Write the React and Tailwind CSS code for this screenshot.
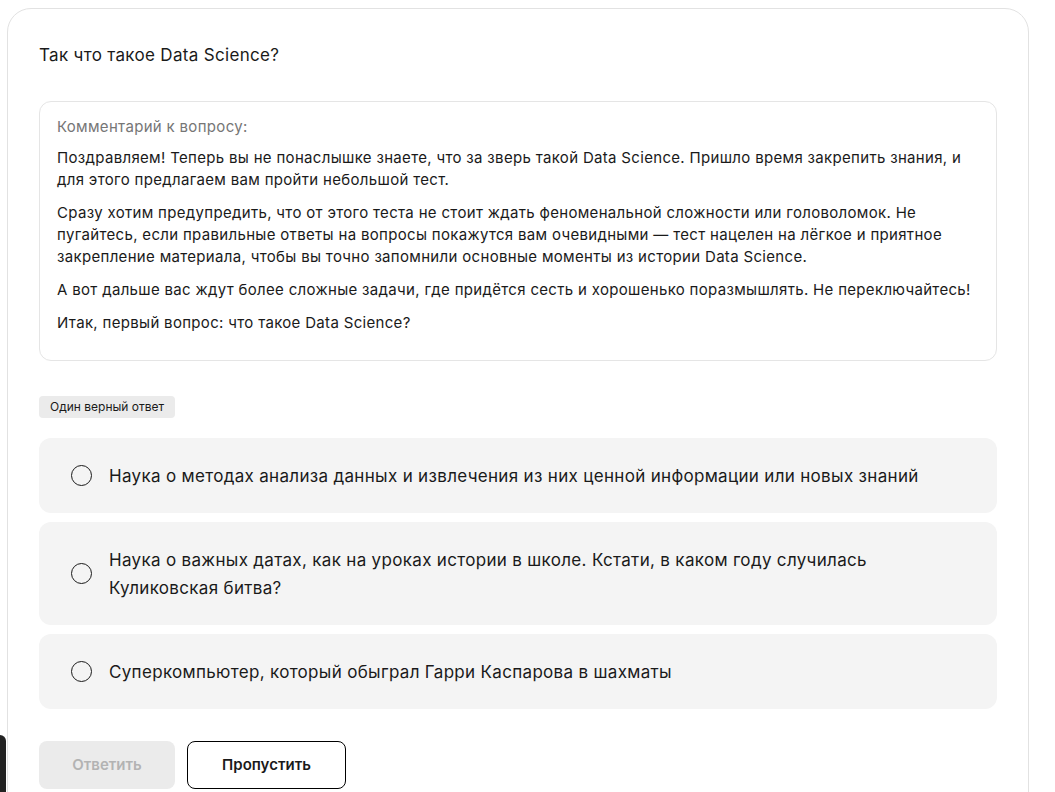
import React, { useState } from 'react';

const options = [
    'Наука о методах анализа данных и извлечения из них ценной информации или новых знаний',
    'Наука о важных датах, как на уроках истории в школе. Кстати, в каком году случилась Куликовская битва?',
    'Суперкомпьютер, который обыграл Гарри Каспарова в шахматы',
];

export default function App() {
    const [selected, setSelected] = useState(null);

    return (
        <div className="relative h-[792px] overflow-hidden bg-white font-['Inter',sans-serif] tracking-[0.02em] text-[#1a1a1a]">
            <div className="absolute left-0 top-[735px] h-[80px] w-[6px] rounded-tr-[6px] bg-[#222]" />
            <div className="ml-[7px] mt-[8px] w-[1022px] rounded-[24px] border border-[#e2e2e2] px-[31px] pt-[33px] pb-[40px]">
                <h2 className="text-[17px] leading-[26px]">Так что такое Data Science?</h2>

                <div className="mt-[33px] rounded-[12px] border border-[#e5e5e5] px-[17px] pt-[14px] pb-[26px] text-[15px] leading-[22px]">
                    <p className="text-[#767676]">Комментарий к вопросу:</p>
                    <p className="mt-[9px]">
                        Поздравляем! Теперь вы не понаслышке знаете, что за зверь такой Data Science. Пришло время закрепить знания, и для этого предлагаем вам пройти небольшой тест.
                    </p>
                    <p className="mt-[11px]">
                        Сразу хотим предупредить, что от этого теста не стоит ждать феноменальной сложности или головоломок. Не пугайтесь, если правильные ответы на вопросы покажутся вам очевидными — тест нацелен на лёгкое и приятное закрепление материала, чтобы вы точно запомнили основные моменты из истории Data Science.
                    </p>
                    <p className="mt-[11px]">
                        А вот дальше вас ждут более сложные задачи, где придётся сесть и хорошенько поразмышлять. Не переключайтесь!
                    </p>
                    <p className="mt-[11px]">Итак, первый вопрос: что такое Data Science?</p>
                </div>

                <div className="mt-[35px] inline-flex h-[22px] items-center rounded-[4px] bg-[#ebebeb] px-[11px] text-[12px] tracking-normal">
                    Один верный ответ
                </div>

                <div className="mt-[20px] flex flex-col gap-[9px]">
                    {options.map((text, i) => (
                        <button
                            key={i}
                            onClick={() => setSelected(i)}
                            className="flex min-h-[75px] items-center gap-[17px] rounded-[12px] bg-[#f4f4f4] px-[32px] py-[23.5px] text-left text-[17px] leading-[28px]"
                        >
                            <span className="flex h-[21px] w-[21px] shrink-0 items-center justify-center rounded-full border-[1.5px] border-[#1a1a1a]">
                                {selected === i && <span className="h-[10px] w-[10px] rounded-full bg-[#1a1a1a]" />}
                            </span>
                            <span className="max-w-[835px]">{text}</span>
                        </button>
                    ))}
                </div>

                <div className="mt-[32px] flex gap-[12px]">
                    <button
                        disabled={selected === null}
                        className="h-[48px] w-[136px] rounded-[8px] bg-[#ebebeb] text-[15px] font-semibold tracking-normal text-[#b3b3b3]"
                    >
                        Ответить
                    </button>
                    <button className="h-[48px] w-[159px] rounded-[8px] border border-black text-[15px] font-semibold tracking-normal">
                        Пропустить
                    </button>
                </div>
            </div>
        </div>
    );
}
